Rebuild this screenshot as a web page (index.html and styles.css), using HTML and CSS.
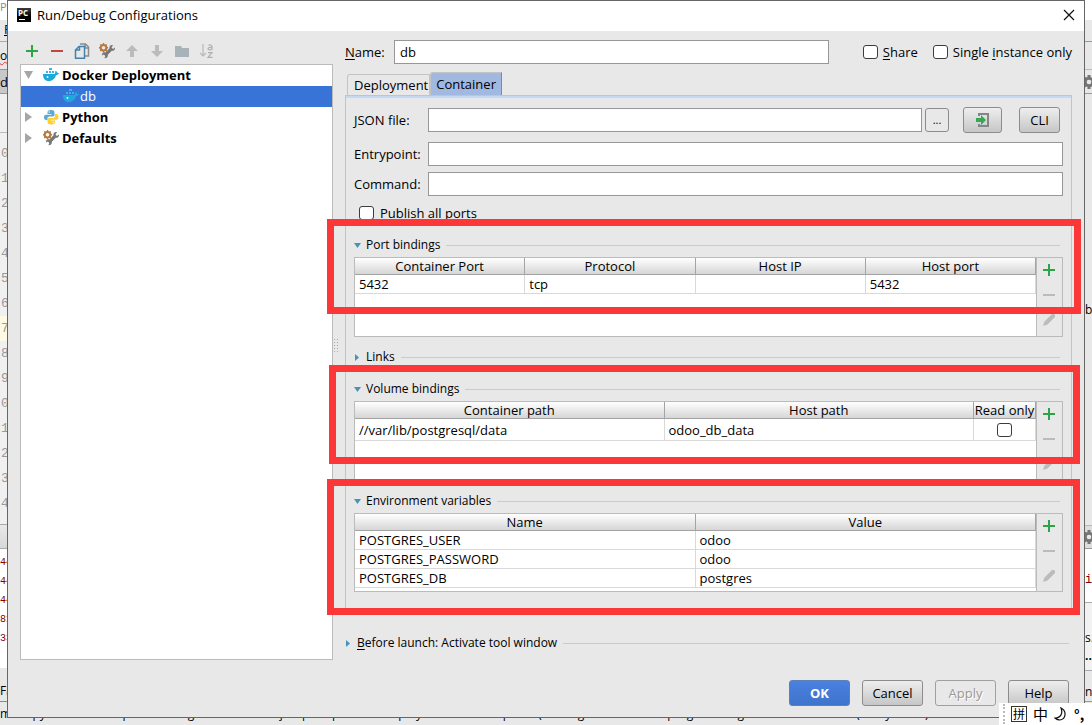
FILE: index.html
```html
<!DOCTYPE html>
<html lang="en">
<head>
<meta charset="utf-8">
<title>Run/Debug Configurations</title>
<link rel="stylesheet" href="styles.css">
</head>
<body>
<svg class="defs" aria-hidden="true">
  <defs>
    <linearGradient id="pc" x1="0" y1="0" x2="0" y2="1"><stop offset="0" stop-color="#3c3c3c"/><stop offset=".6" stop-color="#000"/></linearGradient>
    <symbol id="plus" viewBox="0 0 12 12"><path d="M5 0h2v5h5v2H7v5H5V7H0V5h5z" fill="#2da44a"/></symbol>
    <symbol id="minus" viewBox="0 0 12 12"><path d="M0 5h12v2H0z" fill="currentColor"/></symbol>
    <symbol id="pencil" viewBox="0 0 12 12"><path d="M0 12l1.500-4.500L8 1l1-1h2l1 1v2l-1 1-6.500 6.500z" fill="#bcbcbc"/></symbol>
    <symbol id="docker" viewBox="0 0 16 14"><path d="M6 0h3v2H6zM3 3h2v2H3zM6 3h2v2H6zM9 3h2v2H9z" fill="#35b8e8"/><path d="M0 6h11c1 0 1.500-1 1-2.500l1-.5c1 .5 1 1 1.200 1.700L16 5c-.5 1.500-1.500 2-3 2-1 4-4 6-7.500 6C2 13 0 10.500 0 6z" fill="#1caadb"/><circle cx="4.500" cy="9" r=".9" fill="#fff"/></symbol>
    <symbol id="python" viewBox="0 0 16 16"><path d="M8 1C5 1 4.500 2 4.500 3.500V5h4v.8H3C1.500 5.800 1 7 1 8.500S1.800 11 3 11h1.500V9.500C4.500 8 5.500 7.500 7 7.500h3c1 0 1.500-.8 1.500-1.700V3.500C11.500 1.800 10.500 1 8 1z" fill="#5ba9d6"/><circle cx="6.200" cy="3" r=".7" fill="#fff"/><path d="M8 15.500c3.500 0 4-1 4-2.500v-1.500H8v-.8h5.500c1.500 0 2-1.200 2-2.700s-.8-3-2-3h-1.500V7c0 1.500-1 2-2.500 2h-3c-1 0-2 .8-2 1.700V13c0 1.700 1 2.500 3.500 2.500z" fill="#ffd02e"/><circle cx="10.200" cy="13.500" r=".7" fill="#fff"/></symbol>
    <symbol id="tools" viewBox="0 0 16 16"><circle cx="4.500" cy="4.800" r="2.800" fill="none" stroke="#b77a3c" stroke-width="2"/><path d="M4.500 0v1.500M4.500 8v1.500M0 4.800h1.500M7.500 4.800H9M1.300 1.600l1 1M6.700 7l1 1M1.300 8l1-1M6.700 2.600l1-1" stroke="#b77a3c" stroke-width="1.400"/><path d="M14 2.200c-2.200-.6-4 .8-3.500 3L6.300 9.400c-2-.4-3.600 1-3.300 3l1.900-.9 1.400 1.400-.9 2.300c2.200.3 3.900-1.200 3.400-3.400l4-4c2 .3 3.500-1.200 3.200-3.400l-2 1.500-1.500-1.500z" fill="#777"/></symbol>
    <symbol id="gear" viewBox="0 0 14 14"><path d="M5.500 0h3v2l1.500.7L11.500 1.300l1.700 1.900L12 4.800l.4 1.200H14v2.500h-1.700L12 9.700l1.200 1.400-1.700 1.700-1.600-1.200-1.400.5V14h-3v-2l-1.300-.5-1.500 1.200L1 11l1.200-1.400-.6-1.200H0V6h1.600l.6-1.300L1 3.200l1.700-1.800L4.200 2.600 5.500 2z" fill="#757575"/><circle cx="7" cy="7" r="2.300" fill="#e8e8e8"/></symbol>
    <symbol id="down" viewBox="0 0 7 5"><path d="M0 0h7L3.500 5z" fill="#4594bd"/></symbol>
    <symbol id="right" viewBox="0 0 7 7"><path d="M1 0l4 3.500L1 7z" fill="#4594bd"/></symbol>
  </defs>
</svg>

<div class="ide" aria-hidden="true">
  <div class="ide-left">
    <div class="l-title">Pr</div>
    <div class="l-menu">F</div>
    <div class="l-nav"><span>oc</span></div>
    <div class="l-tab">d</div>
    <div class="gutter">
      <span class="fold"></span>
      <span>0</span><span>1</span><span>2</span><span>3</span><span>4</span><span>5</span><span>6</span><span class="current">7</span><span>8</span><span>9</span><span>0</span><span>1</span><span>2</span><span>3</span><span>4</span>
    </div>
    <div class="l-tool"></div>
    <div class="l-console"><span>44</span><span>44</span><span>44</span><span>81</span><span>33</span></div>
    <div class="l-foot">Fa</div>
  </div>
  <div class="ide-right">
    <div class="r-title"></div>
    <div class="r-menu"></div>
    <div class="r-nav"></div>
    <div class="r-gear"><svg width="14" height="14"><use href="#gear"/></svg></div>
    <div class="r-editor">b</div>
    <div class="r-gear r-tool"><svg width="14" height="14"><use href="#gear"/></svg></div>
    <div class="r-console">i,</div>
    <div class="r-log"><span>s.</span><b>...</b></div>
    <div class="r-foot">n</div>
  </div>
  <div class="status">mote python db: interpreter configuration docker javapath/port is in deployed server exception: (message: driver failed programming external connecti... (today 12:12) 39:17</div>
</div>

<main class="dialog">
  <header class="titlebar">
    <svg width="14" height="14" viewBox="0 0 14 14"><rect width="14" height="14" fill="url(#pc)"/><text x="1" y="8" class="logo-text">PC</text><path d="M2 11h6v1H2z" fill="#fff"/></svg>
    <h1>Run/Debug Configurations</h1>
    <button class="close" aria-label="Close"><svg width="12" height="12" viewBox="0 0 12 12"><path d="M1 1l10 10M11 1L1 11" stroke="#111" stroke-width="1.200"/></svg></button>
  </header>

  <div class="body">
    <aside class="side">
      <div class="toolbar">
        <button aria-label="Add"><svg width="12" height="12"><use href="#plus"/></svg></button>
        <button aria-label="Remove" class="red"><svg width="12" height="12"><use href="#minus"/></svg></button>
        <button aria-label="Copy"><svg width="16" height="16" viewBox="0 0 16 16" fill="none" stroke-width="1.500"><path d="M6 1h5.500L14.500 4v9H11" stroke="#8b8b8b"/><path d="M11 1v4h3.500" stroke="#8b8b8b"/><path d="M5 3.500h5.500V15.200H1.500V7z" stroke="#3f84ad" fill="#e8e8e8"/><path d="M5.500 3.500V7h-4" stroke="#3f84ad"/></svg></button>
        <button aria-label="Edit defaults"><svg width="16" height="16"><use href="#tools"/></svg></button>
        <button aria-label="Move up" disabled><svg width="12" height="12" viewBox="0 0 12 12"><path d="M6 0l6 6H8v6H4V6H0z" fill="#bbb"/></svg></button>
        <button aria-label="Move down" disabled><svg width="12" height="12" viewBox="0 0 12 12"><path d="M6 12l6-6H8V0H4v6H0z" fill="#bbb"/></svg></button>
        <button aria-label="New folder"><svg width="14" height="12" viewBox="0 0 14 12"><path d="M0 1h6l1 2h7v9H0z" fill="#a8b2b9"/></svg></button>
        <button aria-label="Sort" disabled><svg width="14" height="16" viewBox="0 0 14 16"><path d="M3 1v12M0 10l3 3 3-3" stroke="#b8b8b8" fill="none" stroke-width="1.200"/><path d="M8.500 2.500c1-.8 3.500-.8 3.500 1V7M12 4.500c-2.500-.2-4 .2-4 1.300 0 1.500 3 1.500 4 0M8 9.700h4L8 14.300h4.500" stroke="#b0b0b0" fill="none" stroke-width="1.200"/></svg></button>
      </div>
      <ul class="tree">
        <li><button class="twist" aria-label="Collapse"><svg width="10" height="10" viewBox="0 0 10 10"><path d="M0 1h9L4.500 9z" fill="#a6a6a6"/></svg></button><svg width="16" height="14"><use href="#docker"/></svg><b>Docker Deployment</b></li>
        <li class="selected"><svg width="16" height="14"><use href="#docker"/></svg><span>db</span></li>
        <li><button class="twist" aria-label="Expand"><svg width="10" height="10" viewBox="0 0 10 10"><path d="M1 0l7 5-7 5z" fill="#a6a6a6"/></svg></button><svg width="16" height="16"><use href="#python"/></svg><b>Python</b></li>
        <li><button class="twist" aria-label="Expand"><svg width="10" height="10" viewBox="0 0 10 10"><path d="M1 0l7 5-7 5z" fill="#a6a6a6"/></svg></button><svg width="16" height="16"><use href="#tools"/></svg><b>Defaults</b></li>
      </ul>
    </aside>
    <div class="splitter"><i></i></div>

    <section class="config">
      <div class="name-row">
        <label for="name"><u>N</u>ame:</label>
        <input class="field" id="name" type="text" value="db">
        <label class="check"><input type="checkbox"><span><u>S</u>hare</span></label>
        <label class="check"><input type="checkbox"><span>Single <u>i</u>nstance only</span></label>
      </div>

      <div class="tabs" role="tablist">
        <button class="tab" role="tab">Deployment</button>
        <button class="tab active" role="tab" aria-selected="true">Container</button>
      </div>

      <div class="panel">
        <div class="form-row json">
          <label for="json">JSON file:</label>
          <input class="field" id="json" type="text">
          <button class="btn browse" aria-label="Browse">...</button>
          <button class="btn import" aria-label="Import"><svg width="14" height="16" viewBox="0 0 14 16"><path d="M3 4V2h9v12H3v-2" fill="none" stroke="#858585" stroke-width="2"/><path d="M0 6h5V3l5 5-5 5v-3H0z" fill="#34a853"/></svg></button>
          <button class="btn cli">CLI</button>
        </div>
        <div class="form-row entry">
          <label for="entry">Entrypoint:</label>
          <input class="field" id="entry" type="text">
        </div>
        <div class="form-row command">
          <label for="command">Command:</label>
          <input class="field" id="command" type="text">
        </div>
        <label class="check publish"><input type="checkbox"><span>Publish all ports</span></label>

        <section class="group marked ports">
          <h2><button><svg width="7" height="5"><use href="#down"/></svg>Port bindings</button></h2>
          <div class="grid">
            <div class="sheet">
              <table>
                <thead><tr><th>Container Port</th><th>Protocol</th><th>Host IP</th><th>Host port</th></tr></thead>
                <tbody><tr><td>5432</td><td>tcp</td><td></td><td>5432</td></tr></tbody>
              </table>
            </div>
            <div class="actions">
              <button aria-label="Add"><svg width="12" height="12"><use href="#plus"/></svg></button>
              <button aria-label="Remove" disabled><svg width="12" height="12"><use href="#minus"/></svg></button>
              <button aria-label="Edit" disabled><svg width="12" height="12"><use href="#pencil"/></svg></button>
            </div>
          </div>
        </section>

        <section class="group">
          <h2><button><svg width="7" height="7"><use href="#right"/></svg>Links</button></h2>
        </section>

        <section class="group marked volumes">
          <h2><button><svg width="7" height="5"><use href="#down"/></svg>Volume bindings</button></h2>
          <div class="grid">
            <div class="sheet">
              <table>
                <colgroup><col><col><col class="narrow"></colgroup>
                <thead><tr><th>Container path</th><th>Host path</th><th>Read only</th></tr></thead>
                <tbody><tr><td>//var/lib/postgresql/data</td><td>odoo_db_data</td><td class="tick"><input type="checkbox" aria-label="Read only"></td></tr></tbody>
              </table>
            </div>
            <div class="actions">
              <button aria-label="Add"><svg width="12" height="12"><use href="#plus"/></svg></button>
              <button aria-label="Remove" disabled><svg width="12" height="12"><use href="#minus"/></svg></button>
              <button aria-label="Edit" disabled><svg width="12" height="12"><use href="#pencil"/></svg></button>
            </div>
          </div>
        </section>

        <section class="group marked env">
          <h2><button><svg width="7" height="5"><use href="#down"/></svg>Environment variables</button></h2>
          <div class="grid">
            <div class="sheet">
              <table>
                <thead><tr><th>Name</th><th>Value</th></tr></thead>
                <tbody>
                  <tr><td>POSTGRES_USER</td><td>odoo</td></tr>
                  <tr><td>POSTGRES_PASSWORD</td><td>odoo</td></tr>
                  <tr><td>POSTGRES_DB</td><td>postgres</td></tr>
                </tbody>
              </table>
            </div>
            <div class="actions">
              <button aria-label="Add"><svg width="12" height="12"><use href="#plus"/></svg></button>
              <button aria-label="Remove" disabled><svg width="12" height="12"><use href="#minus"/></svg></button>
              <button aria-label="Edit" disabled><svg width="12" height="12"><use href="#pencil"/></svg></button>
            </div>
          </div>
        </section>
      </div>

      <section class="group before">
        <h2><button><svg width="7" height="7"><use href="#right"/></svg><span><u>B</u>efore launch: Activate tool window</span></button></h2>
      </section>
    </section>
  </div>

  <footer class="footer">
    <button class="btn primary">OK</button>
    <button class="btn">Cancel</button>
    <button class="btn" disabled>Apply</button>
    <button class="btn">Help</button>
  </footer>
</main>

<div class="ime" lang="zh">
  <i></i><span class="boxed">拼</span><span>中</span>
  <svg width="14" height="14" viewBox="0 0 14 14"><path d="M7 1c6 3 5 11-1 12-2 0-4-1-5-2 6 0 8-5 6-10z" fill="none" stroke="#111" stroke-width="1.200"/></svg>
  <span class="punct">°,</span>
</div>
</body>
</html>
```
FILE: styles.css
```css
* { box-sizing: border-box; }

html, body { height: 100%; margin: 0; }

body {
  position: relative;
  overflow: hidden;
  background: #e8e8e8;
  color: #000;
  font: 13px/18px "Open Sans", "Noto Sans CJK SC", sans-serif;
}

button, input { font: inherit; color: inherit; margin: 0; }
button { padding: 0; border: 0; background: none; }
svg { display: block; flex: none; }
.defs { position: absolute; width: 0; height: 0; }
u { text-underline-offset: 2px; }

/* Editor window behind the dialog */
.ide {
  position: absolute;
  inset: 0;
  display: grid;
  grid-template: 1fr 23px / 8px 7px;
  justify-content: space-between;
}
.ide-left, .ide-right { display: flex; flex-direction: column; overflow: hidden; }
.ide-left > div, .ide-right > div { flex: none; overflow: hidden; white-space: nowrap; }
.l-title { height: 20px; background: #fff; color: #888; font-size: 11px; line-height: 14px; }
.l-menu { height: 22px; border-bottom: 1px solid #aaa; padding-left: 4px; text-decoration: underline; }
.l-nav { height: 28px; line-height: 28px; border-bottom: 1px solid #999; font-size: 12px; }
.l-nav span { text-decoration: underline wavy #e33 1px; }
.l-tab { height: 24px; line-height: 24px; background: #c8c8c8; border-bottom: 1px solid #999; }
.ide-left > .gutter {
  flex: 1;
  display: flex;
  flex-direction: column;
  padding-top: 38px;
  background: #f0f0f0;
  color: #999;
  font: 13px/25px "Liberation Mono", monospace;
}
.gutter span { padding-left: 1px; flex: none; }
.gutter .fold { height: 9px; border-top: 1px solid #bbb; }
.gutter .current { background: #fffae3; }
.l-tool { height: 25px; border: solid #aaa; border-width: 1px 0; background: linear-gradient(#e8e8e8, #d8d8d8); }
.l-console { height: 119px; padding-top: 4px; background: #fff; color: #7f0000; font: 10px/19px "Liberation Mono", monospace; }
.l-console span { display: block; }
.l-foot { height: 34px; padding-top: 14px; border-bottom: 1px solid #888; font-size: 12px; }
.r-title { height: 20px; background: #fff; }
.r-menu { height: 22px; border-bottom: 1px solid #999; }
.r-nav { height: 28px; border-bottom: 1px solid #bbb; }
.r-gear { display: grid; place-items: center; place-content: center; height: 24px; border-bottom: 1px solid #999; }
.ide-right > .r-editor { flex: 1; padding-top: 207px; font-size: 12px; }
.r-tool { background: #ddd; border-top: 1px solid #bbb; }
.r-console { height: 54px; padding-top: 22px; background: #fff; border-bottom: 1px solid #aaa; color: #7f0000; font: 12px/18px "Liberation Mono", monospace; }
.r-log { height: 68px; padding-top: 26px; background: #f2f2f2; border-bottom: 1px solid #aaa; font-size: 12px; }
.r-log span, .r-log b { display: block; }
.r-foot { height: 31px; padding-top: 12px; border-bottom: 1px solid #999; font-size: 12px; }
.status { grid-column: 1 / -1; overflow: hidden; white-space: nowrap; font-size: 12px; line-height: 23px; }

/* Dialog frame */
.dialog {
  position: absolute;
  inset: 0 7px 7px 7px;
  display: flex;
  flex-direction: column;
  border: 1px solid #666;
  background: #e8e8e8;
}
.titlebar {
  display: flex;
  align-items: center;
  height: 30px;
  padding: 0 9px 2px;
  gap: 6px;
  background: #fff;
}
.titlebar h1 { flex: 1; margin: 0; font-size: 13px; font-weight: 400; }
.logo-text { font: bold 8px "Open Sans", sans-serif; fill: #fff; }
.body {
  flex: 1;
  display: grid;
  grid-template-columns: 313px 12px minmax(0, 1fr);
  padding: 0 12px 20px;
  min-height: 0;
}

/* Configuration list */
.side { display: flex; flex-direction: column; }
.toolbar { display: flex; height: 33px; padding-top: 8px; }
.toolbar button { display: grid; place-items: center; width: 25px; height: 24px; padding-right: 1px; }
.red { color: #c4473c; }
.tree {
  flex: 1;
  margin: 0;
  padding: 0;
  border: 1px solid #bbb;
  background: #fff;
  list-style: none;
}
.tree li { display: flex; align-items: center; height: 21px; padding: 0 0 1px 3px; gap: 3px; }
.tree .twist { width: 16px; }
.tree .selected { padding-left: 42px; gap: 1px; background: #3874d8; color: #fff; }
.splitter { display: flex; align-items: center; }
.splitter i { width: 5px; height: 16px; background: radial-gradient(circle, #aaa 1px, transparent 1px) 0 0 / 3px 3px; }

/* Form controls */
.config { padding-top: 9px; }
.field {
  flex: 1;
  min-width: 0;
  height: 24px;
  padding: 0 5px;
  border: 1px solid #979797;
  background: #fff;
}
input[type="checkbox"] {
  appearance: none;
  width: 15px;
  height: 14px;
  border: 1px solid #3c3c3c;
  border-radius: 3px;
  background: #fff;
}
.check { display: flex; align-items: center; gap: 6px; }
.name-row { display: flex; align-items: center; }
.name-row > label:first-child { width: 49px; }
.name-row .check { margin-left: 34px; gap: 5px; }
.name-row .check + .check { margin-left: 15px; }
.tabs { display: flex; align-items: flex-end; margin-top: 8px; padding-left: 2px; }
.tab { height: 21px; padding: 0 1px 0 6px; border: 1px solid #c4c4c4; border-bottom: 0; border-radius: 3px 0 0 0; white-space: nowrap; }
.tab.active { height: 23px; padding: 0 5px; background: #a1b8e0; border-right-color: #888; }
.panel {
  display: flex;
  flex-direction: column;
  height: 516px;
  padding: 11px 8px 0;
  border: 1px solid #c4c4c4;
  box-shadow: inset 0 2px #c5daf2;
}
.form-row { display: flex; align-items: center; }
.form-row label { width: 74px; }
.entry { margin-top: 9px; }
.command { margin-top: 6px; }
.btn {
  width: 61px;
  height: 26px;
  border: 1px solid #8c8c8c;
  border-radius: 3px;
  background: linear-gradient(#eee, #c6c6c6);
}
.browse { width: 24px; height: 24px; margin-left: 3px; background: #e8e8e8; font-size: 11px; line-height: 16px; }
.import { display: grid; place-items: center; width: 39px; margin-left: 14px; }
.cli { width: 41px; margin: 0 3px 0 17px; }
.publish { align-self: flex-start; height: 20px; margin-top: 7px; padding-left: 5px; }

/* Collapsible groups */
.group { position: relative; }
.group h2 { display: flex; align-items: center; height: 20px; margin: 0; padding-right: 3px; gap: 6px; font-size: 12px; font-weight: 400; }
.group h2::after { content: ""; flex: 1; height: 1px; background: #cbcbcb; }
.group h2 button { display: flex; align-items: center; gap: 5px; }
.ports { margin-top: 12px; }
.ports + .group, .env { margin-top: 10px; }
.volumes { margin-top: 12px; }
.before { margin-top: 22px; }
.grid { display: flex; height: 80px; margin-top: 2px; border: 1px solid #bbb; }
.env .grid { height: 79px; }
.sheet { flex: 1; min-width: 0; background: #fff; }
.actions { display: flex; flex-direction: column; width: 26px; padding-right: 1px; border-left: 1px solid #bbb; color: #bbb; }
.actions button { display: grid; place-items: center; height: 25px; padding-bottom: 1px; }
table { width: 100%; border-collapse: separate; border-spacing: 0; table-layout: fixed; }
th {
  height: 17px;
  padding: 0;
  border-right: 1px solid #a4a4a4;
  border-bottom: 1px solid #a4a4a4;
  background: linear-gradient(#fff, #d6d6d6);
  font-weight: 400;
  line-height: 16px;
  white-space: nowrap;
}
td { height: 19px; padding: 0 4px; border: solid #d9d9d9; border-width: 0 1px 1px 0; line-height: 18px; }
.narrow { width: 62px; }
.tick { height: 22px; }
.tick input { display: block; margin: 0 auto; }

/* Red call-out frames around a group */
.marked::after {
  content: "";
  position: absolute;
  z-index: 1;
  border: 7px solid #fc3737;
  pointer-events: none;
}
.ports::after { inset: -16px -18px 23px -27px; }
.volumes::after { inset: -14px -17px 17px -25px; }
.env::after { inset: -12px -17px -23px -27px; }

.footer { display: flex; justify-content: flex-end; gap: 12px; padding: 0 15px 11px; }
.primary { border-color: #5c80b8; background: linear-gradient(#4a80df, #3f74cc); color: #fff; font-weight: 700; }
.btn:disabled { background: #e8e8e8; border-color: #a0a0a0; color: #999; text-shadow: 1px 1px #fff; }

/* Input method bar */
.ime {
  position: absolute;
  right: 0;
  bottom: 0;
  z-index: 2;
  display: flex;
  align-items: center;
  width: 93px;
  height: 22px;
  padding-left: 4px;
  gap: 6px;
  background: #fff;
  font: 15px/18px "Noto Sans CJK SC", sans-serif;
}
.ime i { width: 2px; height: 20px; border-left: 2px dotted #bbb; }
.ime .boxed { display: grid; place-items: center; width: 16px; height: 16px; border: 1px solid #333; font-size: 12px; line-height: 12px; }
.ime .punct { font-size: 14px; font-weight: 700; }
```
